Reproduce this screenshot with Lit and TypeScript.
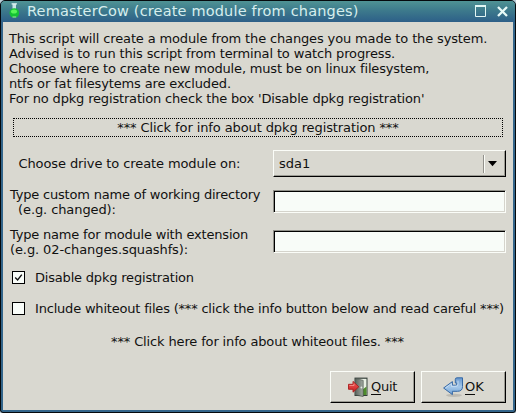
import { LitElement, html, css, svg } from "lit";
import { customElement, property, state } from "lit/decorators.js";
import { classMap } from "lit/directives/class-map.js";

@customElement("bevel-button")
class BevelButton extends LitElement {
  @property() label = "";
  @property() icon = "";

  static styles = css`
    :host { display: block; width: 85px; height: 32px; white-space: nowrap; }
    .btn {
      box-sizing: border-box; width: 100%; height: 100%;
      display: flex; align-items: center; gap: 3px; padding: 0 0 1px 17px;
      border: 1px solid; border-color: #fbfdf8 #000 #000 #fbfdf8;
      box-shadow: inset -1px -1px 0 #9b9b93;
      background: #d9d8d0;
      font: 13px/15px "DejaVu Sans", sans-serif;
      color: #111;
    }
    .ok { padding-left: 21px; gap: 2px; }
    .quit .text { letter-spacing: -0.3px; }
    .first { box-shadow: 0 1px 0 #0b0b0b; }
    svg { display: block; flex: none; }
  `;

  private glyph() {
    if (this.icon === "quit") {
      return svg`
        <defs>
          <linearGradient id="door" x1="0" x2="1"><stop offset="0" stop-color="#5c6660"/><stop offset="1" stop-color="#a3aaa2"/></linearGradient>
          <linearGradient id="red" x1="0" x2="0" y1="0" y2="1"><stop offset="0" stop-color="#f0605c"/><stop offset="1" stop-color="#c81c20"/></linearGradient>
        </defs>
        <rect x="6.5" y="0.6" width="13" height="18.4" fill="#343e38"/>
        <rect x="7.5" y="1.8" width="11" height="16.2" fill="#e9efe4"/>
        <path d="M14 13 L18.5 9.5 V18 H13Z" fill="#4e8c2c"/>
        <path d="M7.5 1.8 H9.5 L15.2 3.4 V19.6 L7.5 18Z" fill="url(#door)" stroke="#3f4943" stroke-width=".6"/>
        <circle cx="13.4" cy="10.5" r=".9" fill="#e8ebe6"/>
        <path d="M.5 7.3 H5 V4.4 L10.8 9.8 L5 15.2 V12.3 H.5Z" fill="url(#red)" stroke="#a81c1c" stroke-width=".9"/>
        <path d="M1.4 8.5 H6 V6.8" fill="none" stroke="#f9a09a" stroke-width=".7"/>`;
    }
    return svg`
      <defs>
        <linearGradient id="blue" x1="0" x2="0" y1="0" y2="1"><stop offset="0" stop-color="#6797cd"/><stop offset=".55" stop-color="#a5c8ea"/><stop offset="1" stop-color="#6c9fd4"/></linearGradient>
      </defs>
      <ellipse cx="11" cy="18.3" rx="8" ry="1.6" fill="#aaa9a2" opacity=".6"/>
      <path d="M14 .8 H19.5 V9.5 Q19.5 14.3 14.5 14.3 H9.4 V17.6 L.6 11 L9.4 4.6 V8.2 H12.6 Q13.8 8.2 13.8 7 V6 H12.3 V2.4 Q12.3 .8 14 .8Z"
        fill="url(#blue)" stroke="#3568a5" stroke-width="1" stroke-linejoin="round"/>
      <path d="M2.5 10.9 L8.4 6.6 V9.3 H13.4 Q15 9.1 15 7 V3.6" fill="none" stroke="#d3e6f8" stroke-width=".8"/>`;
  }

  render() {
    return html`<div class=${classMap({ btn: true, [this.icon]: true })}>
      <svg width="20" height="20" viewBox="0 0 20 20">${this.glyph()}</svg>
      <span class="text"><span class="first">${this.label[0]}</span>${this.label.slice(1)}</span>
    </div>`;
  }
}

@customElement("check-row")
class CheckRow extends LitElement {
  @property({ type: Boolean }) checked = false;

  static styles = css`
    :host { display: flex; align-items: center; gap: 10px; height: 15px; white-space: nowrap; }
    .box { box-sizing: border-box; width: 13px; height: 13px; border: 1px solid #000; background: #f9fdf9; flex: none; }
    svg { display: block; }
  `;

  render() {
    return html`<div class="box">
        ${this.checked
          ? html`<svg width="11" height="11" viewBox="0 0 11 11"><path d="M2.2 5.6 L4.6 8 L8.8 2.6" fill="none" stroke="#111" stroke-width="1.4"/></svg>`
          : ""}
      </div>
      <slot></slot>`;
  }
}

@customElement("app-root")
class AppRoot extends LitElement {
  @state() drive = "sda1";

  static styles = css`
    :host {
      display: block; width: 516px; height: 413px; background: #b9cdd6;
      font: 13px/15px "DejaVu Sans", sans-serif;
      color: #111; white-space: pre;
    }
    .window {
      box-sizing: border-box; width: 516px; height: 413px;
      border: 1px solid #05090c; border-radius: 5px 5px 3px 3px;
      background: #33658a; padding: 0 2px 2px;
      display: flex; flex-direction: column; overflow: hidden;
    }
    .titlebar {
      height: 21px; flex: none; margin: 0 -2px; padding: 0 7px 1px;
      box-sizing: border-box; display: flex; align-items: center;
      background: linear-gradient(#4f9394, #3d7a8c 45%, #2d5f88);
      color: #d6eeee; font: 14.5px/19px "DejaVu Sans", sans-serif; letter-spacing: 0.16px;
    }
    .flask { margin-right: 6px; }
    .title { flex: 1; }
    .max { margin-right: 11px; }
    svg { display: block; flex: none; }
    .body { flex: 1; background: #d9d8d0; padding: 9px 7px 7px 6px; display: flex; flex-direction: column; }
    .line { display: block; }
    .a { letter-spacing: -0.1px; }
    .b { letter-spacing: -0.14px; }
    .c { letter-spacing: -0.17px; }
    .d { letter-spacing: -0.195px; }
    .info {
      box-sizing: border-box; height: 19px; margin: 12px 3px 0 4px; text-align: center;
      border: 1px dotted #000; padding-top: 1px;
    }
    .grid {
      display: grid; grid-template-columns: 264px 233px; margin-top: 13px;
      row-gap: 13px; grid-template-rows: 27px 27px 27px;
    }
    .label { padding-left: 1px; margin-top: -3px; }
    .label.single { padding-left: 9.5px; margin-top: 6px; }
    .combo {
      box-sizing: border-box; height: 27px; border: 1px solid; border-color: #fbfdf8 #000 #000 #fbfdf8;
      box-shadow: inset -1px -1px 0 #9b9b93; display: flex; align-items: center; padding: 0 7px 0 5px;
    }
    .value { flex: 1; }
    .sep { width: 1px; height: 18px; background: #93928c; border-right: 1px solid #fbfdf8; margin-right: 2px; }
    .entry {
      box-sizing: border-box; height: 23px; background: #f8fcf8; border: 1px solid;
      border-color: #8f8f88 #fbfdf8 #fbfdf8 #8f8f88;
      box-shadow: inset 1px 1px 0 #000, inset -1px -1px 0 #d5d4cc;
    }
    .checks { display: flex; flex-direction: column; gap: 16px; margin: 13px 0 0 3px; }
    .whiteout { text-align: center; margin-top: 18px; }
    .actions { display: flex; gap: 6px; justify-content: flex-end; margin-top: auto; }
  `;

  render() {
    return html`<div class="window">
      <div class="titlebar"><svg class="flask" width="13" height="16" viewBox="0 0 13 16">
          <path d="M4.5 1 H8 V6 H4.5Z" fill="#c8e6e6"/>
          <path d="M3.6 .8 H8.9" stroke="#e6f8f8" stroke-width="1.2"/>
          <circle cx="6.3" cy="10" r="4.8" fill="#14c234"/>
          <ellipse cx="6" cy="8.4" rx="3" ry="2" fill="#58f558"/>
          <path d="M4.5 14 H8.2" stroke="#a6dcae" stroke-width="1.2"/>
        </svg><span class="title">RemasterCow (create module from changes)</span><svg class="max" width="11" height="12" viewBox="0 0 11 12">
          <path d="M.5 1 V11.5 H10.5 V1" fill="none" stroke="#e2f6f4"/><path d="M0 1 H11" stroke="#e2f6f4" stroke-width="2"/>
        </svg><svg width="11" height="11" viewBox="0 0 11 11"><path d="M1 1 L10 10 M10 1 L1 10" stroke="#e8faf8" stroke-width="2.3"/></svg></div>
      <div class="body"><div><span class="line b">This script will create a module from the changes you made to the system.</span><span class="line b">Advised is to run this script from terminal to watch progress.</span><span class="line c">Choose where to create new module, must be on linux filesystem,</span><span class="line b">ntfs or fat filesytems are excluded.</span><span class="line c">For no dpkg registration check the box 'Disable dpkg registration'</span></div><div class="info a">*** Click for info about dpkg registration ***</div><div class="grid"><div class="label single a">Choose drive to create module on:</div><div class="combo"><span class="value">${this.drive}</span><span class="sep"></span><svg width="11" height="7" viewBox="0 0 11 7"><path d="M1 1 H10 L5.5 6.2Z" fill="#000"/></svg></div><div class="label"><span class="line d">Type custom name of working directory</span><span class="line a">  (e.g. changed):</span></div><div class="entry"></div><div class="label"><span class="line d">Type name for module with extension</span><span class="line a">(e.g. 02-changes.squashfs):</span></div><div class="entry"></div></div><div class="checks"><check-row checked><span class="d">Disable dpkg registration</span></check-row><check-row><span class="d">Include whiteout files (*** click the info button below and read careful ***)</span></check-row></div><div class="whiteout b">*** Click here for info about whiteout files. ***</div><div class="actions"><bevel-button icon="quit" label="Quit"></bevel-button><bevel-button icon="ok" label="OK"></bevel-button></div></div>
    </div>`;
  }
}
